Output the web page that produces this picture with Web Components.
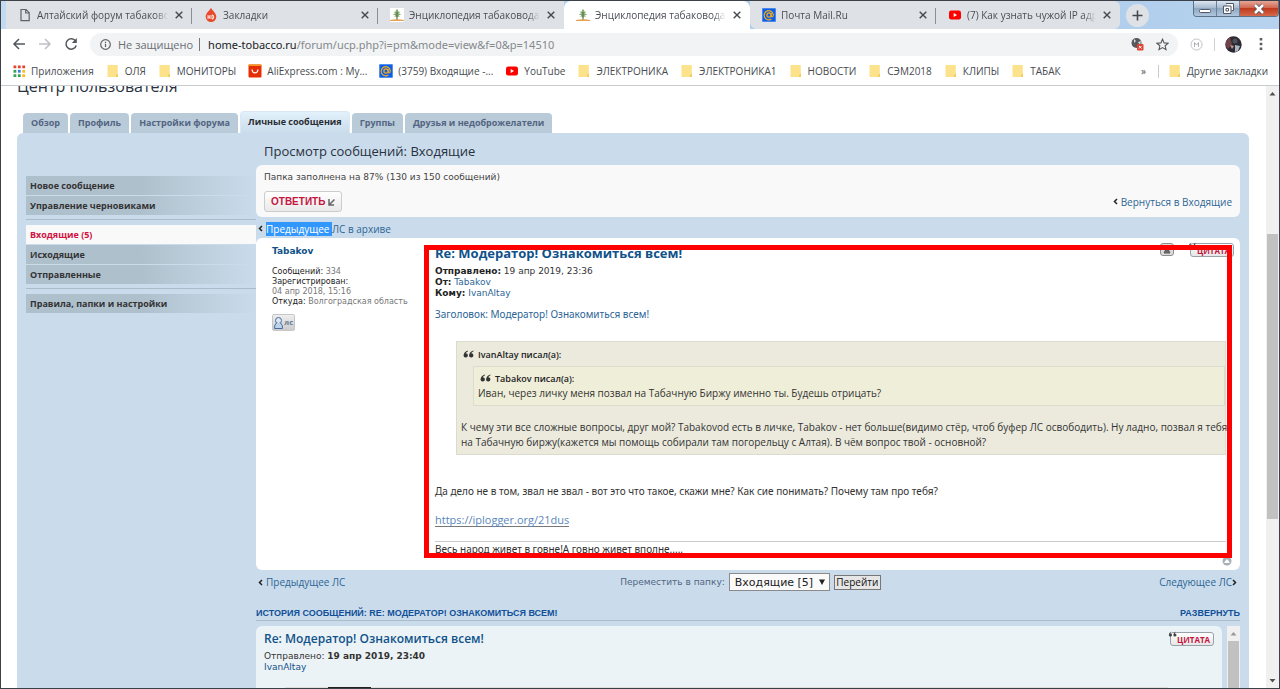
<!DOCTYPE html>
<html lang="ru">
<head>
<meta charset="utf-8">
<title>Энциклопедия табаковода. Просмотр сообщений</title>
<style>
html,body{margin:0;height:100%;overflow:hidden}
body{font-family:"DejaVu Sans",Verdana,sans-serif;color:#333}
</style>
</head>
<body>
<browser-window></browser-window>
<script>
const define = (name, css, html, setup) => {
  const tpl = document.createElement('template');
  tpl.innerHTML = `<style>*{box-sizing:border-box}${css}</style>${html}`;
  customElements.define(name, class extends HTMLElement {
    static observedAttributes = ['name'];
    constructor() {
      super();
      this.attachShadow({mode: 'open'}).append(tpl.content.cloneNode(true));
    }
    connectedCallback() { if (setup) setup(this, this.shadowRoot); }
    attributeChangedCallback() { if (setup) setup(this, this.shadowRoot); }
  });
};

const icons = {
  page: '<svg viewBox="0 0 14 14"><path d="M3 1.5h5l3.2 3.2v8H3z M7.7 1.5v3.5h3.5" fill="none" stroke="#5f6368" stroke-width="1.2"/></svg>',
  drop: '<svg viewBox="0 0 14 14"><path d="M7 0C9 3 12.300 5.500 12.300 8.800a5.300 5.200 0 0 1-10.600 0C1.700 5.500 5 3 7 0z" fill="#e8492b"/><path d="M4 7v4M6 7v4M4 9h2M8 7v4h1q1.600-2 0-4z" fill="none" stroke="#fff" stroke-width=".9"/></svg>',
  tree: '<svg viewBox="0 0 14 14"><path fill="#fff" d="M0 0h14v14H0z"/><path d="M7 .8l1.300 2.200-.6.300 2.600.7-2 1.300 2.900.9-2.700 1.300 1.600 1.300-2.300-.2v.7H6.200v-.7l-2.300.2 1.600-1.300-2.700-1.300 2.900-.9-2-1.300 2.600-.7-.6-.3z" fill="#84aa70"/><path d="M6.400 4h1.200v8H6.400z" fill="#567b42"/><path d="M0 12q7-1.500 14 0v1H0z" fill="#e5a152"/></svg>',
  mail: '<svg viewBox="0 0 14 14"><path fill="#0b5fe8" d="M.3.3h13.400v13.400H.3z"/><circle cx="7" cy="7" r="2.100" fill="none" stroke="#f3a91c" stroke-width="1.200"/><path d="M9.100 4.900v2.700q.2 1.500 1.300 1.100 1-.5.9-2A4.600 4.600 0 1 0 9.400 11" fill="none" stroke="#f3a91c" stroke-width="1.200"/></svg>',
  tube: '<svg viewBox="0 0 14 14"><rect x="1" y="2.500" width="12" height="9" rx="2.200" fill="#f00"/><path d="M5.700 5v4l3.300-2z" fill="#fff"/></svg>',
  folder: '<svg viewBox="0 0 14 14"><path d="M1.500 1h10.300v9.500q-1 0-1 1V13H1.500z" fill="#fde28c"/><path d="M12 9.500v3.500h-2v-2z" fill="#f4ce5a"/></svg>',
  ali: '<svg viewBox="0 0 14 14"><rect x=".5" y=".5" width="13" height="13" rx="1" fill="#e62e04"/><path d="M.5 1.500V.500h13v1.500H.500z" fill="#f8981d"/><path d="M4 5.500c.6 4.500 5.400 4.500 6 0" fill="none" stroke="#fff" stroke-width="1.200"/></svg>',
  apps: '<svg viewBox="0 0 14 14"><path d="M1.500 1.500h2.800v2.800H1.500zM5.900 1.500h2.800v2.800H5.900zM10.300 1.500h2.800v2.800h-2.800z" fill="#e8432f"/><path d="M1.500 5.900h2.800v2.800H1.500z" fill="#35a455"/><path d="M5.900 5.900h2.800v2.800H5.900z" fill="#3a7df0"/><path d="M10.300 5.900h2.800v2.800h-2.800z" fill="#f9bc15"/><path d="M1.500 10.300h2.800v2.800H1.500zM5.900 10.300h2.800v2.800H5.900z" fill="#35a455"/><path d="M10.300 10.300h2.800v2.800h-2.800z" fill="#f9bc15"/></svg>'
};

define('site-icon', ':host{display:block;flex:none;width:14px;height:14px}svg{display:block;width:100%;height:100%}', '<span></span>',
  (el, root) => { root.querySelector('span').innerHTML = icons[el.getAttribute('name')] || ''; });

define('browser-tab', `
:host{display:flex;align-items:center;flex:0 1 186px;min-width:0;height:28px;padding:0 8px 0 12px;background:#dee1e6;color:#4b4f54;font-size:10px}
:host([active]){background:#fff;border-radius:7px 7px 0 0}
:host([after]){border-radius:0 0 0 7px}
:host([line]){background:linear-gradient(#8b8f94,#8b8f94) right 7px/1px 16px no-repeat #dee1e6}
:host([last]){flex-basis:184px;border-radius:0 6px 6px 0}
span{flex:1;min-width:0;overflow:hidden;white-space:nowrap;margin:0 6px 0 5px;-webkit-mask:linear-gradient(90deg,#000 90%,transparent)}
button{flex:none;border:0;background:none;padding:0;width:10px;height:10px}
svg{display:block}`,
`<site-icon></site-icon><span><slot></slot></span><button aria-label="Закрыть вкладку"><svg width="10" height="10" viewBox="0 0 10 10"><path d="M1.700 1.700l6.600 6.600M8.300 1.700L1.700 8.300" stroke="#45494d" stroke-width="1.400"/></svg></button>`,
(el, root) => root.querySelector('site-icon').setAttribute('name', el.getAttribute('icon')));

define('bookmark-item', `
:host{display:block;flex:none}
a{display:flex;align-items:center;gap:5px;color:#474b4f;text-decoration:none;font-size:10px;white-space:nowrap}`,
`<a href="#"><site-icon></site-icon><slot></slot></a>`,
(el, root) => root.querySelector('site-icon').setAttribute('name', el.getAttribute('icon') || 'folder'));

define('window-controls', `
:host{display:flex;height:16px;border:1px solid #5d7187;border-top:0;border-radius:0 0 4px 4px;overflow:hidden}
button{border:0;padding:0;height:15px;display:grid;place-items:center;background:linear-gradient(#dbe6f1,#a3b6cb 50%,#8fa8c2 50%,#b0c6dd);border-right:1px solid #6b8199;width:23px}
button.close{width:38px;border:0;background:linear-gradient(#e5a698,#d1614a 50%,#c03a1f 50%,#d46a4b)}`,
`<button aria-label="Свернуть"><svg width="14" height="12"><rect x="1.500" y="6.500" width="11" height="3" rx="1" fill="#fff" stroke="#535666"/></svg></button>
<button aria-label="Восстановить"><svg width="13" height="13"><path d="M4 1.500h7.500v7H10M1.500 4h7.500v7.500H1.500zM4 6.500h2.500V9H4z" fill="#fff" stroke="#535666"/></svg></button>
<button class="close" aria-label="Закрыть"><svg width="14" height="12"><path d="M3 2l8 8M11 2l-8 8" stroke="#535666" stroke-width="4"/><path d="M3 2l8 8M11 2l-8 8" stroke="#fff" stroke-width="2.500"/></svg></button>`);

define('address-bar', `
:host{display:flex;align-items:center;height:30px;background:#fff;padding:0 16px 0 11px;font-size:11px}
button{border:0;background:none;padding:0;width:14px;height:14px;margin-right:12px;flex:none}
svg{display:block}
.omni{flex:1;min-width:0;display:flex;align-items:center;height:23px;border-radius:12px;background:#f1f3f4;padding:0 9px;color:#6b6f74;white-space:nowrap}
.omni>svg{flex:none}
.sec{margin:0 6px 0 6px}
.bar{width:1px;height:13px;background:#777;margin-right:8px}
.url{flex:1;color:#85898d;font-family:"Noto Sans",sans-serif}.url b{font-weight:400;color:#202124}
.omni .star{margin-left:12px}
.m{margin:0 11px 0 12px}.sep{width:1px;height:13px;background:#d0d3d6}.face{margin:0 17px 0 10px}`,
`<button aria-label="Назад"><svg width="14" height="14"><path d="M13 7H2M7 2L2 7l5 5" fill="none" stroke="#54585c" stroke-width="1.500"/></svg></button>
<button aria-label="Вперёд"><svg width="14" height="14"><path d="M1 7h11M7 2l5 5-5 5" fill="none" stroke="#bdc0c4" stroke-width="1.500"/></svg></button>
<button aria-label="Обновить"><svg width="14" height="14"><path d="M11.500 4A5.200 5.200 0 1 0 12.200 8.500" fill="none" stroke="#54585c" stroke-width="1.500"/><path d="M12.800 1v5H7.800z" fill="#54585c"/></svg></button>
<div class="omni"><svg width="13" height="13"><circle cx="6.500" cy="6.500" r="4.800" fill="none" stroke="#5f6368" stroke-width="1.200"/><path d="M6.500 5.800V9M6.500 3.700v1.200" stroke="#5f6368" stroke-width="1.200"/></svg>
<span class="sec">Не защищено</span><i class="bar"></i><span class="url"><b>home-tobacco.ru</b>/forum/ucp.php?i=pm&amp;mode=view&amp;f=0&amp;p=14510</span>
<svg width="14" height="14"><circle cx="6.500" cy="6" r="5" fill="#55595d"/><path d="M4 2l2 2-2 2zM8 5l3-1-1 4z" fill="#d7dadd"/><rect x="7" y="7" width="6.500" height="6.500" rx="1" fill="#dd4436"/><path d="M9 9l2.500 2.500M11.500 9L9 11.500" stroke="#fff"/></svg>
<svg class="star" width="13" height="13" viewBox="0 0 13 13"><path d="M6.500 1.200l1.600 3.700 4 .3-3 2.600.9 3.900-3.500-2.100L3 11.700l.9-3.900-3-2.600 4-.3z" fill="none" stroke="#54585c" stroke-width="1.100"/></svg></div>
<svg class="m" width="13" height="13"><circle cx="6.500" cy="6.500" r="5.500" fill="none" stroke="#bfc2c5"/><path d="M4.500 9V4.500l2 2.500 2-2.500V9" fill="none" stroke="#aeb1b5"/></svg><i class="sep"></i>
<svg class="face" width="17" height="17"><circle cx="8.500" cy="8.500" r="8.200" fill="#2e2a33"/><path d="M.8 6A8 8 0 0 1 5 1.200L7 8l-4 5Q0 10 .8 6z" fill="#70434a"/><circle cx="10" cy="5" r="2.500" fill="#4d5258"/><path d="M10 9l5 1-2 5-3 1z" fill="#a9b6c4"/><path d="M5 9l4 1-2 3z" fill="#c79c8b"/></svg>
<svg width="4" height="14"><path d="M.7 1h2.600v2.600H.7zM.7 5.700h2.600v2.600H.7zM.7 10.400h2.600V13H.7z" fill="#5a5e62"/></svg>`);

define('scroll-bar', `
:host{display:flex;flex-direction:column;align-items:stretch;width:13px;background:#f0f0f0;flex:none}
svg{display:block;flex:none;width:13px;height:15px}
i{flex:var(--above,0) 1 0}b{flex:var(--size,1) 1 0;margin:0 1px;background:#c1c1c1}u{flex:var(--below,0) 1 0}`,
`<svg><path d="M3.500 9.500l3-3.500 3 3.500z" fill="var(--up,#505050)"/></svg><i></i><b></b><u></u><svg><path d="M3.500 6l3 3.500L9.500 6z" fill="#505050"/></svg>`);

define('forum-tabs', `
:host{display:block}
nav{display:flex;align-items:flex-end;gap:2px;padding-left:6px}
a{display:block;height:20px;line-height:19px;padding:0 8px;border-radius:4px 4px 0 0;background:#b9cbd8;color:#536482;font-family:"Open Sans",sans-serif;font-size:9px;font-weight:700;text-decoration:none;white-space:nowrap}
a[aria-current]{height:22px;line-height:20px;background:linear-gradient(#e2f1fb,#cadceb);color:#282d33;border:1px solid #dbe8f3;border-bottom:0;padding:0 7px}`,
`<nav><a href="#">Обзор</a><a href="#">Профиль</a><a href="#">Настройки форума</a><a href="#" aria-current="page">Личные сообщения</a><a href="#">Группы</a><a href="#">Друзья и недоброжелатели</a></nav>`);

define('side-menu', `
:host{display:block}
ul{list-style:none;margin:0;padding:0 0 4px;display:grid;gap:1px}
ul+ul{padding-top:5px;border-top:1px solid #a9bcca}
a{display:block;height:19px;line-height:19px;padding:0 4px;background:linear-gradient(90deg,#afc0cd 50%,#cadceb);color:#333;font-family:"Open Sans",sans-serif;font-size:9px;font-weight:700;text-decoration:none;white-space:nowrap}
a[aria-current]{background:#f9f9f9;color:#d31141}`,
`<ul><li><a href="#">Новое сообщение</a></li><li><a href="#">Управление черновиками</a></li></ul>
<ul><li><a href="#" aria-current="page">Входящие (5)</a></li><li><a href="#">Исходящие</a></li><li><a href="#">Отправленные</a></li></ul>
<ul><li><a href="#">Правила, папки и настройки</a></li></ul>`);

define('arrow-link', `
:host{display:inline-block}
a{display:flex;align-items:center;gap:3px;color:#2d6596;text-decoration:none;font-size:10px;white-space:nowrap;font-family:"Open Sans",sans-serif}
svg{flex:none}:host([next]) a{flex-direction:row-reverse;gap:0}:host([next]) svg{transform:scaleX(-1)}`,
`<a href="#"><svg width="5" height="7"><path d="M4 1L1.500 3.500 4 6" fill="none" stroke="#222" stroke-width="1.500"/></svg><span><slot></slot></span></a>`);

define('quote-button', `
:host{display:block;position:relative;width:46px;height:15px}
button{margin:0 0 0 2px;width:44px;height:14px;padding:0 0 0 3px;border:1px solid #98a0a8;border-radius:3px;background:linear-gradient(#fff,#e6e6e8);color:#c4173f;font:700 8px/11px "Open Sans",sans-serif;display:block}
svg{position:absolute;left:0;top:-1px}`,
`<button>ЦИТАТА</button><svg width="9" height="8"><path d="M3.500.5Q1 1 .800 4a1.600 1.600 0 1 0 1.500-1.600Q2.400 1.500 3.500.5zM8 .5Q5.500 1 5.300 4a1.600 1.600 0 1 0 1.500-1.600Q6.900 1.500 8 .5z" fill="#444"/></svg>`);

define('quote-block', `
:host{display:block;background:#ebeadd;border:1px solid #dbdbce;padding:5px 0 4px 4px;font-family:"Open Sans",sans-serif;white-space:nowrap}
:host([inner]){background:#efeed9;padding:4px}
cite{display:flex;align-items:center;gap:4px;font-style:normal;font-weight:600;font-size:9px;line-height:15px;color:#222;padding-left:2px}
div{line-height:15px}`,
`<cite><svg width="11" height="9"><path d="M5 .5Q1 1.500.500 5.500a2.200 2.200 0 1 0 2.200-2.300Q3.200 2 5 1.200zM10.500.5Q6.500 1.500 6 5.500a2.200 2.200 0 1 0 2.200-2.300Q8.700 2 10.500 1.200z" fill="#333"/></svg><span></span></cite><div><slot></slot></div>`,
(el, root) => root.querySelector('span').textContent = el.getAttribute('author') + ' писал(а):');

define('author-card', `
:host{display:block;width:168px;flex:none;padding:7px 0 0 16px;font-size:8px;line-height:10px;color:#777}
h4{margin:0 0 10px;font-size:9px;line-height:12px}h4 a{color:#105289;text-decoration:none}
dl{margin:0}dl div{margin:0}dt,dd{display:inline;margin:0}dt{color:#222}
.reg dd{display:block}
button{margin-top:7px;width:23px;height:17px;border:1px solid #c7c7c7;border-radius:2px;background:linear-gradient(#eee,#ccc);padding:0;display:flex;align-items:center;font:700 7px "DejaVu Sans",sans-serif;color:#69809a}
svg{flex:none}`,
`<h4><a href="#">Tabakov</a></h4>
<dl><div><dt>Сообщений:</dt> <dd>334</dd></div><div class="reg"><dt>Зарегистрирован:</dt><dd>04 апр 2018, 15:16</dd></div><div><dt>Откуда:</dt> <dd>Волгоградская область</dd></div></dl>
<button><svg width="11" height="14"><circle cx="5.500" cy="4.500" r="3" fill="#dbe9f7" stroke="#4a6a9b"/><path d="M3.500 7Q1 9 1.500 12.500h8Q10 9 7.500 7" fill="#bcd3ec" stroke="#4a6a9b"/></svg>лс</button>`);

define('private-message', `
:host{display:flex;position:relative;background:#fff;border-radius:6px;min-height:332px}
.body{flex:1;min-width:0;padding:5px 14px 0 11px;font:10px/15px "Noto Sans",sans-serif}
header{display:flex;height:23px}
h3{flex:1;margin:0;font:700 13px/20px "Open Sans",sans-serif;color:#105289;white-space:nowrap}
.tool{width:14px;height:13px;margin:0 14px 0 0;border:1px solid #8d8d8d;border-radius:3px;background:#ddd;padding:0;display:grid;place-items:center}
header quote-button{margin-right:-8px}
.meta{font:9px/11px "DejaVu Sans",sans-serif;margin:0}
.meta a,.subject{color:#2d6596;text-decoration:none}.meta b{color:#222}
.subject{display:block;margin:7px 0 19px;line-height:16px}
p{margin:0}quote-block{margin-left:21px}quote-block quote-block{margin:4px 0 14px 12px}
.text{margin:29px 0 14px}
.link{color:#5a87bb;text-decoration:none;border-bottom:1px solid #777;display:inline-block;font:11px/13px "Open Sans",sans-serif}
.sig{margin-top:13px;border-top:1px solid #ccc;line-height:15px}
.mark{position:absolute;left:168px;right:8px;top:7px;bottom:12px;border:5px solid red;pointer-events:none}
.top{position:absolute;right:8px;bottom:4px}`,
`<author-card></author-card>
<div class="body"><header><h3>Re: Модератор! Ознакомиться всем!</h3><button class="tool" aria-label="Пожаловаться"><svg width="8" height="8"><path d="M4 1L1 7h6zM2.500 5h3" fill="#777" stroke="#555"/></svg></button><quote-button></quote-button></header>
<p class="meta"><b>Отправлено:</b> 19 апр 2019, 23:36<br><b>От:</b> <a href="#">Tabakov</a><br><b>Кому:</b> <a href="#">IvanAltay</a></p>
<a class="subject" href="#">Заголовок: Модератор! Ознакомиться всем!</a>
<quote-block author="IvanAltay"><quote-block inner author="Tabakov">Иван, через личку меня позвал на Табачную Биржу именно ты. Будешь отрицать?</quote-block>К чему эти все сложные вопросы, друг мой? Tabakovod есть в личке, Tabakov - нет больше(видимо стёр, чтоб буфер ЛС освободить). Ну ладно, позвал я тебя<br>на Табачную биржу(кажется мы помощь собирали там погорельцу с Алтая). В чём вопрос твой - основной?</quote-block>
<p class="text">Да дело не в том, звал не звал - вот это что такое, скажи мне? Как сие понимать? Почему там про тебя?</p>
<a class="link" href="#">https://iplogger.org/21dus</a>
<div class="sig">Весь народ живет в говне!А говно живет вполне.....</div></div>
<svg class="top" width="10" height="10"><circle cx="5" cy="5" r="4.500" fill="#a8b0b6"/><path d="M2.500 6L5 3l2.500 3v1h-5z" fill="#fff"/></svg>
<div class="mark"></div>`);

define('folder-actions', `
:host{display:grid;grid-template-columns:1fr auto 1fr;align-items:center;height:24px;padding:0 3px 0 2px}
form{display:flex;align-items:center;gap:4px;padding-left:6px;font-size:9px;color:#536482;white-space:nowrap}
select{appearance:none;width:101px;height:18px;border:1px solid #8a8a8a;background:#fafafa;border-radius:0;padding:0 5px;font:11px "DejaVu Sans",sans-serif;color:#222}
.pick{position:relative;display:block;height:18px}.pick svg{position:absolute;right:5px;top:6px}
button{height:15px;width:47px;padding:0;border:1px solid #777;background:#e6e6e6;font:10px "Open Sans",sans-serif;line-height:12px;color:#111}
arrow-link:last-child{justify-self:end}`,
`<arrow-link>Предыдущее ЛС</arrow-link>
<form><label for="dest">Переместить в папку:</label><span class="pick"><select id="dest"><option>Входящие [5]</option></select><svg width="6" height="6"><path d="M0 .5h6L3 6z" fill="#222"/></svg></span><button type="button">Перейти</button></form>
<arrow-link next>Следующее ЛС</arrow-link>`);

define('message-history', `
:host{display:block;margin-top:12px}
header{display:flex;justify-content:space-between;border-bottom:1px solid #a9bcca;font:700 9px/14px "Liberation Sans",Arial,sans-serif;color:#115098;margin-bottom:5px}
h3{font:inherit;margin:0}header a{color:inherit;text-decoration:none}
.list{display:flex;gap:5px;height:90px}
article{flex:1;min-width:0;background:#ecf3f7;border-radius:6px 6px 0 0;padding:3px 8px 0;display:flex;font-size:9px;line-height:11px}
.info{flex:1}h4{margin:0;font:600 12px/20px "Open Sans",sans-serif}h4 a,.from{color:#105289;text-decoration:none}
p{margin:2px 0 0}quote-button{margin-top:3px}
.peek{margin:14px 0 0 21px;height:40px;background:linear-gradient(90deg,#dedfd8 43px,#222 43px,#222 86px,#dedfd8 86px)}`,
`<header><h3>ИСТОРИЯ СООБЩЕНИЙ: RE: МОДЕРАТОР! ОЗНАКОМИТЬСЯ ВСЕМ!</h3><a href="#">РАЗВЕРНУТЬ</a></header>
<div class="list"><article><div class="info"><h4><a href="#">Re: Модератор! Ознакомиться всем!</a></h4><p>Отправлено: <b>19 апр 2019, 23:40</b><br><a class="from" href="#">IvanAltay</a></p><div class="peek"></div></div><quote-button></quote-button></article><scroll-bar style="--up:#999;--size:1"></scroll-bar></div>`);

define('forum-page', `
:host{display:block;flex:1;min-width:0;overflow:hidden;padding:0 17px 0 16px;background:#fff}
h1{margin:-12px 0 21px;font:400 16px/24px "Open Sans",sans-serif;color:#28313f;height:16px}
.panel{display:grid;grid-template-columns:230px minmax(0,1fr);background:#cadceb;border-radius:6px;padding:0 9px;min-height:700px}
side-menu{padding-top:43px}
h2{margin:0;padding:8px 8px 4px;font:400 13px/20px "Open Sans",sans-serif;color:#28313f}
.box{background:#f9f9f9;border-radius:6px;height:52px;padding:5px 8px;font-size:9px;line-height:14px}
.box p{margin:0 0 7px;color:#444}.row{display:flex;justify-content:space-between;align-items:center}
.reply{width:78px;height:21px;border:1px solid #ccc;border-radius:3px;background:linear-gradient(#fff,#e9e9e9);padding:0 6px;color:#c4173f;font:700 10px "Liberation Sans",sans-serif;display:flex;align-items:center;justify-content:space-between}
.prev{height:21px;display:flex;align-items:center;padding:2px 2px 0}mark{background:#3297fd;color:#fff}`,
`<h1>Центр пользователя</h1><forum-tabs></forum-tabs>
<div class="panel"><side-menu></side-menu><main><h2>Просмотр сообщений: Входящие</h2>
<div class="box"><p>Папка заполнена на 87% (130 из 150 сообщений)</p><div class="row"><button class="reply">ОТВЕТИТЬ<svg width="7" height="8"><path d="M1 1v6h5M6.500 1.500L1.500 6.500" fill="none" stroke="#666" stroke-width="1.500"/></svg></button><arrow-link>Вернуться в Входящие</arrow-link></div></div>
<div class="prev"><arrow-link><mark>Предыдущее </mark>ЛС в архиве</arrow-link></div>
<private-message></private-message><folder-actions></folder-actions><message-history></message-history></main></div>`);

define('browser-window', `
:host{display:flex;flex-direction:column;height:100vh;border:1px solid #3c4048;background:#fff;font-family:"Open Sans",sans-serif;box-sizing:border-box;overflow:hidden}
.strip{display:flex;align-items:flex-start;background:linear-gradient(90deg,#c3daf3,#a9cbea 70%,#b6d2ee);height:28px;padding-left:5px;flex:none}
.new{margin:1px auto 0 6px;width:23px;height:23px;border:0;border-radius:50%;background:#dee1e6;padding:0;display:grid;place-items:center;flex:none;align-self:center}
.marks{display:flex;align-items:center;gap:12px;height:27px;flex:none;border-bottom:1px solid #c9cccf;padding:0 11px 2px;color:#474b4f;font-size:10px}
.more{margin-left:auto}.sep{width:1px;height:13px;background:#ccc;margin-right:-3px}
.view{flex:1;min-height:0;display:flex;font-family:"DejaVu Sans",sans-serif}`,
`<div class="strip"><browser-tab icon="page" line>Алтайский форум табаководов</browser-tab><browser-tab icon="drop" line>Закладки</browser-tab><browser-tab icon="tree">Энциклопедия табаковода. Табак</browser-tab><browser-tab icon="tree" active>Энциклопедия табаковода. Табак</browser-tab><browser-tab icon="mail" after line>Почта Mail.Ru</browser-tab><browser-tab icon="tube" last>(7) Как узнать чужой IP адрес</browser-tab>
<button class="new" aria-label="Новая вкладка"><svg width="11" height="11"><path d="M5.500.5v10M.5 5.500h10" stroke="#44484c" stroke-width="1.600"/></svg></button><window-controls></window-controls></div>
<address-bar></address-bar>
<div class="marks"><bookmark-item icon="apps">Приложения</bookmark-item><bookmark-item>ОЛЯ</bookmark-item><bookmark-item>МОНИТОРЫ</bookmark-item><bookmark-item icon="ali">AliExpress.com : Му...</bookmark-item><bookmark-item icon="mail">(3759) Входящие -...</bookmark-item><bookmark-item icon="tube">YouTube</bookmark-item><bookmark-item>ЭЛЕКТРОНИКА</bookmark-item><bookmark-item>ЭЛЕКТРОНИКА1</bookmark-item><bookmark-item>НОВОСТИ</bookmark-item><bookmark-item>СЭМ2018</bookmark-item><bookmark-item>КЛИПЫ</bookmark-item><bookmark-item>ТАБАК</bookmark-item><span class="more">»</span><i class="sep"></i><bookmark-item>Другие закладки</bookmark-item></div>
<div class="view"><forum-page></forum-page><scroll-bar style="--above:133;--size:286;--below:154"></scroll-bar></div>`);
</script>
</body>
</html>
